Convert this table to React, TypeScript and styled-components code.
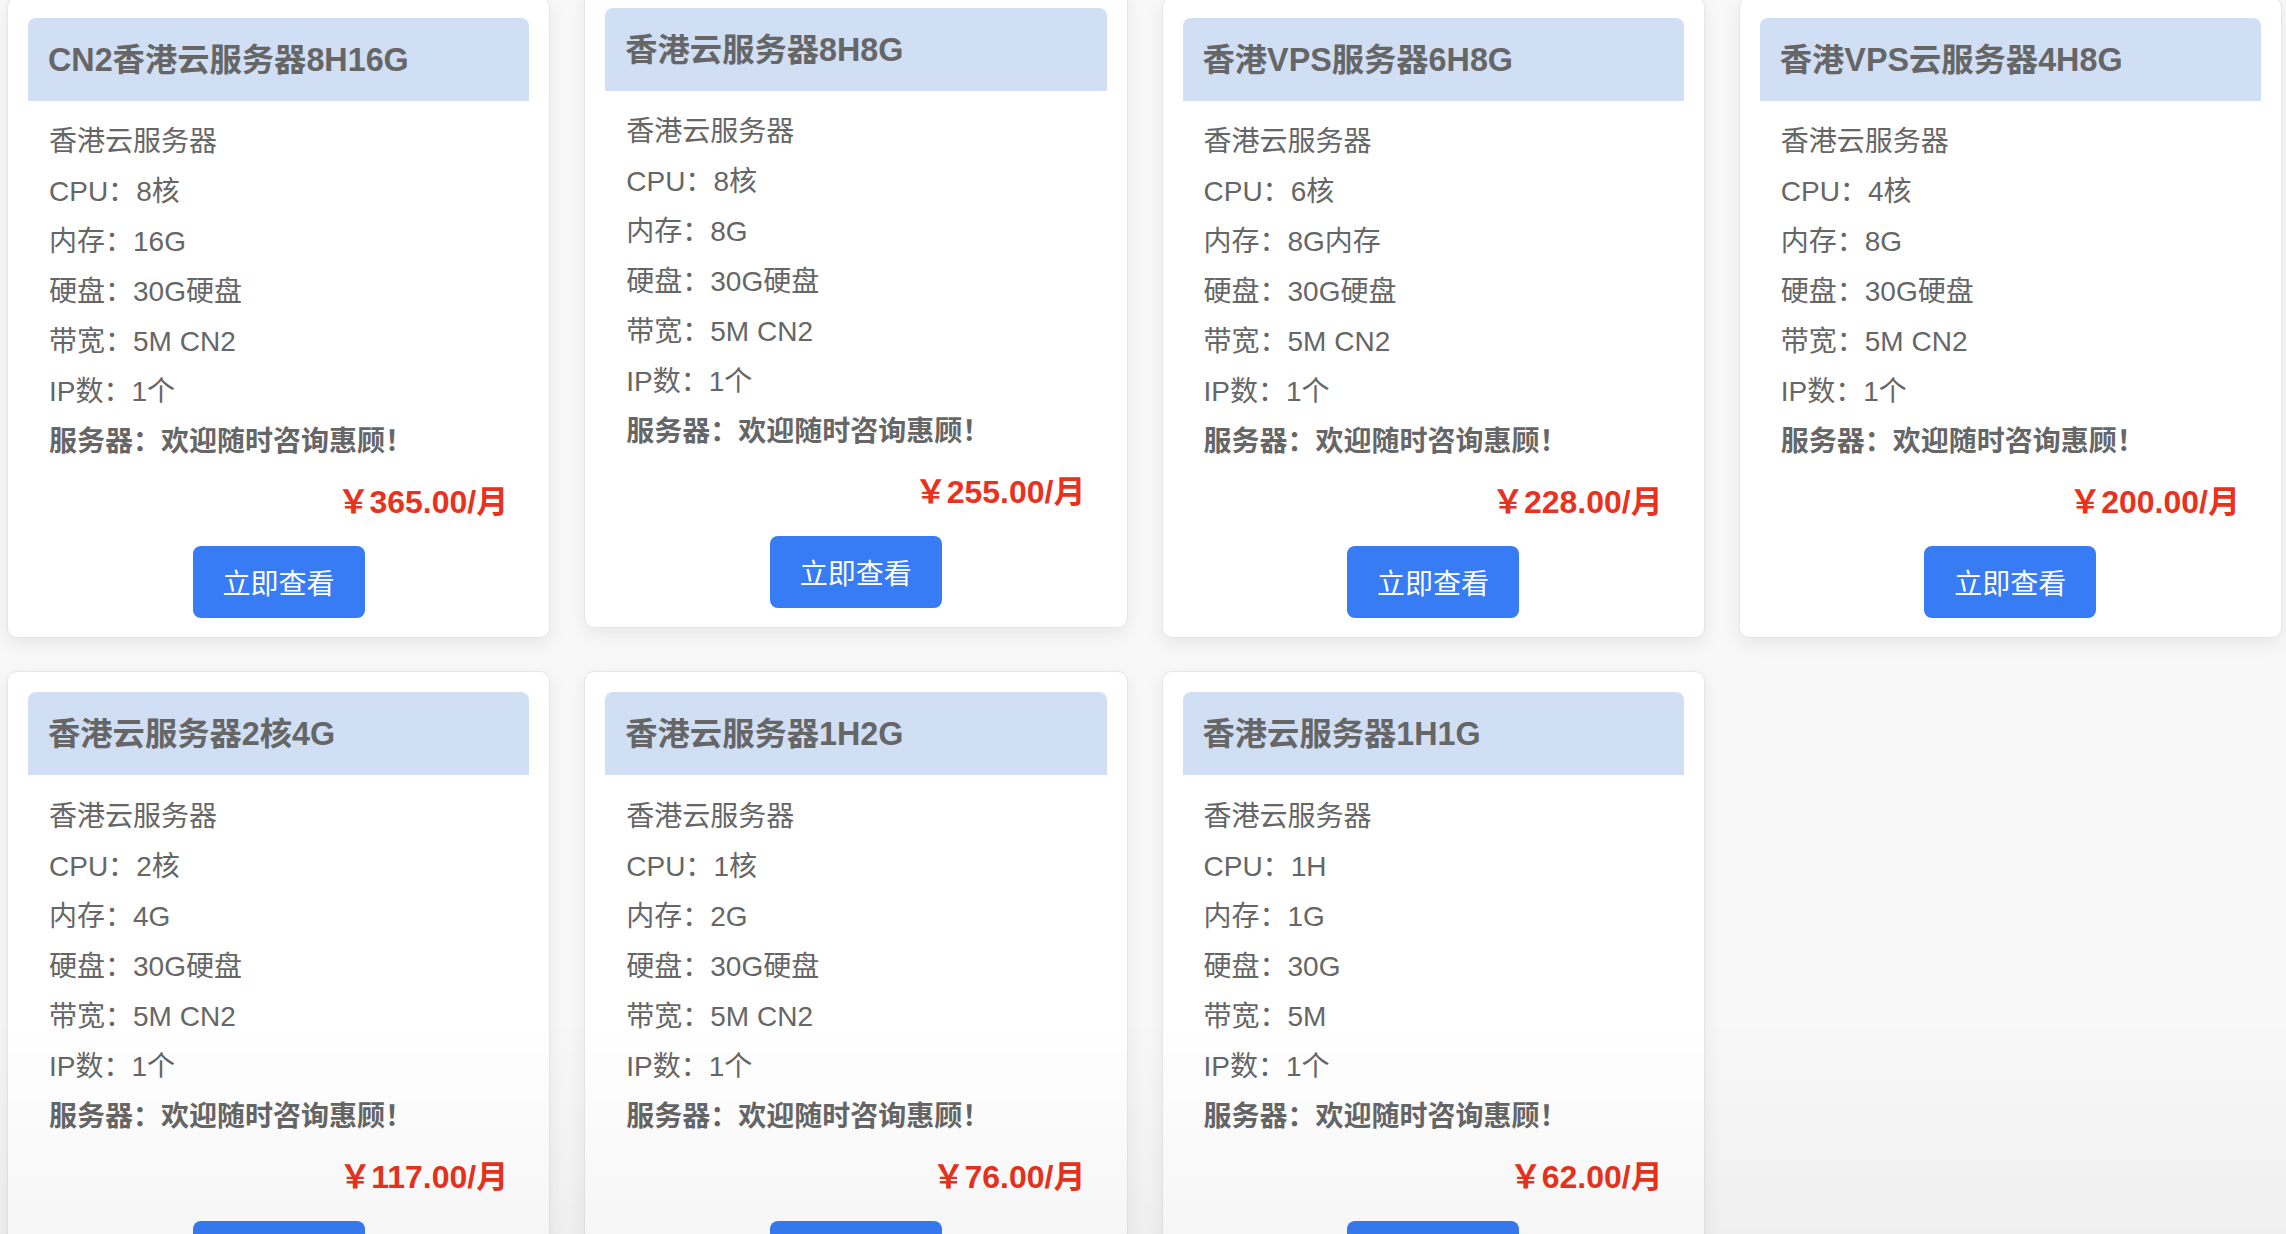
import styled, { createGlobalStyle } from "styled-components";

const GlobalStyle = createGlobalStyle`
  html, body {
    margin: 0;
    padding: 0;
    background: #f8f8f8;
    overflow: hidden;
  }
  body {
    font-family: "Liberation Sans", "Noto Sans CJK SC", sans-serif;
    color: #666;
  }
`;

const Page = styled.div`
  height: 1234px;
  overflow: hidden;
  position: relative;
`;

const Grid = styled.div`
  display: grid;
  grid-template-columns: repeat(4, 1fr);
  gap: 33px 34px;
  padding: 0 4px 0 7px;
  margin-top: -3.5px;
`;

const Card = styled.div<{ $raised?: boolean }>`
  background: #fff;
  border: 1px solid #e6e6e6;
  border-radius: 10px;
  padding: 20px 20px 19px;
  box-shadow: 0 6px 18px rgba(0, 0, 0, 0.07);
  display: flex;
  flex-direction: column;
  transform: translateY(${({ $raised }) => ($raised ? "-10px" : "0")});
`;

const Header = styled.div`
  height: 83px;
  box-sizing: border-box;
  background: #d1dff5;
  border-radius: 8px 8px 0 0;
  display: flex;
  align-items: center;
  padding: 0 20px 5px;
`;

const Title = styled.h3`
  margin: 0;
  font-size: 32.3px;
  font-weight: bold;
  color: #666;
  white-space: nowrap;
`;

const Specs = styled.ul`
  list-style: none;
  margin: 16.5px 0 0;
  padding: 0 21px;
`;

const Spec = styled.li<{ $bold?: boolean }>`
  font-size: 28px;
  line-height: 50px;
  height: 50px;
  white-space: nowrap;
  font-weight: ${({ $bold }) => ($bold ? "bold" : "normal")};
`;

const Price = styled.div`
  margin-top: 10px;
  padding: 0 21px;
  text-align: right;
  font-size: 32px;
  line-height: 50px;
  font-weight: bold;
  color: #e8321e;
`;

const Button = styled.button`
  align-self: center;
  margin-top: 19px;
  width: 172px;
  height: 72px;
  border: none;
  border-radius: 8px;
  background: #377bf5;
  color: #fff;
  font-family: inherit;
  font-size: 28px;
  cursor: pointer;
`;

const BottomFade = styled.div`
  position: absolute;
  left: 0;
  right: 0;
  bottom: 0;
  height: 220px;
  pointer-events: none;
  background: linear-gradient(rgba(0, 0, 0, 0), rgba(0, 0, 0, 0.035));
`;

interface Plan {
  title: string;
  cpu: string;
  mem: string;
  disk: string;
  bw: string;
  price: string;
  raised?: boolean;
}

const plans: Plan[] = [
  { title: "CN2香港云服务器8H16G", cpu: "8核", mem: "16G", disk: "30G硬盘", bw: "5M CN2", price: "365.00" },
  { title: "香港云服务器8H8G", cpu: "8核", mem: "8G", disk: "30G硬盘", bw: "5M CN2", price: "255.00", raised: true },
  { title: "香港VPS服务器6H8G", cpu: "6核", mem: "8G内存", disk: "30G硬盘", bw: "5M CN2", price: "228.00" },
  { title: "香港VPS云服务器4H8G", cpu: "4核", mem: "8G", disk: "30G硬盘", bw: "5M CN2", price: "200.00" },
  { title: "香港云服务器2核4G", cpu: "2核", mem: "4G", disk: "30G硬盘", bw: "5M CN2", price: "117.00" },
  { title: "香港云服务器1H2G", cpu: "1核", mem: "2G", disk: "30G硬盘", bw: "5M CN2", price: "76.00" },
  { title: "香港云服务器1H1G", cpu: "1H", mem: "1G", disk: "30G", bw: "5M", price: "62.00" },
];

const PlanCard = ({ plan }: { plan: Plan }) => (
  <Card $raised={plan.raised}>
    <Header>
      <Title>{plan.title}</Title>
    </Header>
    <Specs>
      <Spec>香港云服务器</Spec>
      <Spec>CPU：{plan.cpu}</Spec>
      <Spec>内存：{plan.mem}</Spec>
      <Spec>硬盘：{plan.disk}</Spec>
      <Spec>带宽：{plan.bw}</Spec>
      <Spec>IP数：1个</Spec>
      <Spec $bold>服务器：欢迎随时咨询惠顾！</Spec>
    </Specs>
    <Price>￥{plan.price}/月</Price>
    <Button>立即查看</Button>
  </Card>
);

export default function App() {
  return (
    <>
      <GlobalStyle />
      <Page>
        <Grid>
          {plans.map((p) => (
            <PlanCard key={p.title} plan={p} />
          ))}
        </Grid>
        <BottomFade />
      </Page>
    </>
  );
}
